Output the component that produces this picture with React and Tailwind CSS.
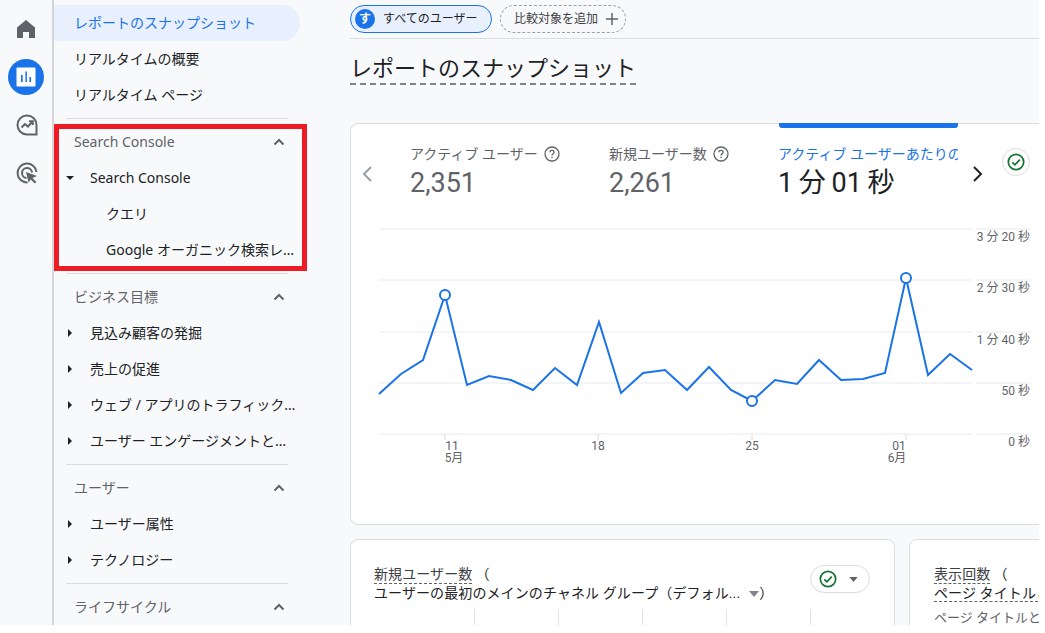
import React from 'react';

const points = [
  [379, 394], [401, 374], [423, 360], [445, 295], [467, 385], [489, 376], [511, 380], [533, 390],
  [555, 368], [577, 385], [599, 322], [621, 393], [643, 373], [665, 370], [687, 390], [709, 367],
  [731, 390], [752, 401], [775, 380], [797, 384], [819, 360], [841, 380], [863, 379], [885, 373],
  [906, 278], [928, 375], [950, 354], [972, 370],
];
const gridLines = [229, 280, 332, 383, 434];
const yLabels = [
  [241, '3 分 20 秒'],
  [292, '2 分 30 秒'],
  [344, '1 分 40 秒'],
  [395, '50 秒'],
  [446, '0 秒'],
];
// tick position, then where the day and month labels sit
const xLabels = [
  [445, 452, '11', 454, '5月'],
  [598, 598, '18', 0, null],
  [752, 752, '25', 0, null],
  [906, 899, '01', 897, '6月'],
];
const markers = [[445, 295], [752, 401], [906, 278]];

function Caret({ open }) {
  return (
    <svg width="8" height="8" viewBox="0 0 8 8" className="shrink-0 fill-[#202124]">
      {open ? <path d="M0 2h8L4 6z" /> : <path d="M2 0v8l4-4z" />}
    </svg>
  );
}

function ChevronUp() {
  return (
    <svg width="14" height="14" viewBox="0 0 14 14" className="fill-none stroke-[#5f6368] stroke-2">
      <path d="M2.500 9.500L7 5l4.500 4.500" />
    </svg>
  );
}

function CheckCircle({ size = 18 }) {
  return (
    <svg width={size} height={size} viewBox="0 0 18 18" className="fill-none stroke-[#137333]">
      <circle cx="9" cy="9" r="7.700" strokeWidth="1.700" />
      <path d="M5.300 9.300l2.600 2.600 4.900-5.200" strokeWidth="1.700" />
    </svg>
  );
}

function Help() {
  return (
    <svg width="16" height="16" viewBox="0 0 16 16" className="fill-none stroke-[#5f6368]">
      <circle cx="8" cy="8" r="7" strokeWidth="1.300" />
      <path d="M5.900 6.300c0-1.200 1-2 2.100-2s2.100.8 2.100 1.900c0 1.500-2.100 1.500-2.100 3.300" strokeWidth="1.300" />
      <path d="M8 10.800v1.300" strokeWidth="1.400" />
    </svg>
  );
}

function SectionHeader({ title }) {
  return (
    <div className="h-9 flex items-center justify-between pl-[20px] pr-[14px] text-[14px] text-[#5f6368] w-[246px]">
      <span className="mb-[2px]">{title}</span>
      <ChevronUp />
    </div>
  );
}

function Divider() {
  return <div className="h-px bg-[#dadce0] ml-[12px] w-[222px] my-[5px]" />;
}

function TreeRow({ label, open }) {
  return (
    <div className="h-9 flex items-center pl-[12px] text-[14px] text-[#202124] w-[246px]">
      <span className="w-[24px] flex">
        <Caret open={open} />
      </span>
      <span className="truncate w-[207px] mb-[2px]">{label}</span>
    </div>
  );
}

function Metric({ label, value, width }) {
  return (
    <div className={width}>
      <div className="flex items-center gap-[6px] h-[20px] text-[14px] text-[#5f6368] whitespace-nowrap">
        <span>{label}</span>
        <Help />
      </div>
      <div className="mt-[2px] text-[27px] leading-[34px] text-[#5f6368]">{value}</div>
    </div>
  );
}

function Rail() {
  return (
    <div className="w-[54px] shrink-0 border-r-2 border-[#d3d5d9] flex flex-col items-center pr-[1px]">
      <svg width="24" height="24" viewBox="0 0 24 24" className="mt-[17px] fill-[#5f6368]">
        <path d="M3 21V10.500L12 3l9 7.500V21h-6v-6h-6v6z" />
      </svg>
      <div className="mt-[18px] w-[36px] h-[36px] rounded-full bg-[#1a73e8] flex items-center justify-center">
        <svg width="20" height="20" viewBox="0 0 20 20">
          <rect width="19" height="19" x="0.500" y="0.500" rx="1" className="fill-white" />
          <path d="M5 8h1.700v7H5zM9.400 4.500h1.500V15H9.400zM13.400 10h1.700v5h-1.700z" className="fill-[#1a73e8]" />
        </svg>
      </div>
      <svg width="24" height="24" viewBox="0 0 24 24" className="mt-[18px] ml-[2px] fill-none stroke-[#5f6368] stroke-2">
        <path d="M21.500 12a9.500 9.500 0 1 0-9.500 9.500h9.500z" />
        <path d="M6.500 14.500l3.500-3.500 3 2.500 4.500-5" />
        <path d="M14 8.200h3.800V12" />
      </svg>
      <svg width="24" height="24" viewBox="0 0 24 24" className="mt-[24px] ml-[2px] fill-none stroke-[#5f6368] stroke-2">
        <path d="M12.500 21.500A9.500 9.500 0 1 1 21.500 11" />
        <path d="M11.500 17A5 5 0 1 1 17 11.500" />
        <path d="M11 11l11 4-4.500 2 3.800 4-1.500 1.500-4-4L13.500 21.500z" className="fill-[#5f6368] stroke-none" />
      </svg>
    </div>
  );
}

function Nav() {
  return (
    <div className="relative w-[296px] shrink-0 pt-[5px] font-['Noto_Sans','Noto_Sans_CJK_JP',sans-serif]">
      <div className="h-9 w-[246px] flex items-center pl-[20px] pb-[2px] rounded-r-full bg-[#e8f0fe] text-[14px] text-[#1a73e8]">
        レポートのスナップショット
      </div>
      <div className="h-9 flex items-center pl-[20px] pb-[2px] text-[14px] text-[#202124]">リアルタイムの概要</div>
      <div className="h-9 flex items-center pl-[20px] pb-[2px] text-[14px] text-[#202124]">リアルタイム ページ</div>
      <Divider />
      <SectionHeader title="Search Console" />
      <TreeRow label="Search Console" open />
      <div className="h-9 flex items-center pl-[52px] pb-[2px] text-[14px] text-[#202124]">クエリ</div>
      <div className="h-9 flex items-center pl-[52px] pb-[2px] text-[14px] text-[#202124] w-[246px]">
        <span className="truncate">Google オーガニック検索レポート</span>
      </div>
      <Divider />
      <SectionHeader title="ビジネス目標" />
      <TreeRow label="見込み顧客の発掘" />
      <TreeRow label="売上の促進" />
      <TreeRow label="ウェブ / アプリのトラフィック獲得" />
      <TreeRow label="ユーザー エンゲージメントと維持率" />
      <Divider />
      <SectionHeader title="ユーザー" />
      <TreeRow label="ユーザー属性" />
      <TreeRow label="テクノロジー" />
      <Divider />
      <SectionHeader title="ライフサイクル" />
      {/* red highlight drawn over the sidebar */}
      <div className="absolute left-0 top-[124px] w-[253px] h-[147px] border-[5px] border-[#ed1c24]" />
    </div>
  );
}

function Chart() {
  return (
    <svg width="690" height="250" viewBox="351 220 690 250" className="block">
      {gridLines.map((y) => (
        <g key={y} className="stroke-[#e8eaed]">
          <line x1="379" x2="972" y1={y} y2={y} />
          <line x1="976" x2="1031" y1={y} y2={y} />
        </g>
      ))}
      {xLabels.map(([tick, dayX, day, monthX, month]) => (
        <g key={day}>
          <line x1={tick} x2={tick} y1="434" y2="440" className="stroke-[#dadce0]" />
          <text x={dayX} y="450" textAnchor="middle" className="fill-[#5f6368] text-[12px]">{day}</text>
          {month && <text x={monthX} y="462" textAnchor="middle" className="fill-[#5f6368] text-[12px]">{month}</text>}
        </g>
      ))}
      {yLabels.map(([y, label]) => (
        <text key={label} x="1030" y={y} textAnchor="end" className="fill-[#5f6368] text-[12px]">{label}</text>
      ))}
      <polyline
        points={points.map((p) => p.join(',')).join(' ')}
        className="fill-none stroke-[#1a73e8] stroke-2"
      />
      {markers.map(([x, y]) => (
        <circle key={x} cx={x} cy={y} r="5" className="fill-white stroke-[#1a73e8] stroke-2" />
      ))}
    </svg>
  );
}

function MainCard() {
  return (
    <div className="relative mt-[38px] w-[700px] h-[402px] shrink-0 bg-white border border-[#dadce0] rounded-lg">
      <div className="absolute left-[428px] top-[-1px] w-[179px] h-[5px] bg-[#1a73e8] rounded-b-[3px]" />
      <div className="flex items-start h-[96px] pt-[20px]">
        <div className="w-[59px] h-[60px] flex items-center pl-[10px]">
          <svg width="14" height="18" viewBox="0 0 14 18" className="fill-none stroke-[#9aa0a6] stroke-2">
            <path d="M10 2L3 9l7 7" />
          </svg>
        </div>
        <Metric label="アクティブ ユーザー" value="2,351" width="w-[199px]" />
        <Metric label="新規ユーザー数" value="2,261" width="w-[169px]" />
        <div className="w-[180px] overflow-hidden">
          <div className="h-[20px] text-[14px] text-[#1a73e8] whitespace-nowrap">アクティブ ユーザーあたりの平均エンゲージメント時間</div>
          <div className="mt-[2px] text-[27px] leading-[34px] text-[#202124] [word-spacing:-1px]">1 分 01 秒</div>
        </div>
        <div className="w-[44px] h-[60px] flex items-center pl-[12px]">
          <svg width="14" height="18" viewBox="0 0 14 18" className="fill-none stroke-[#202124] stroke-2">
            <path d="M4 2l7 7-7 7" />
          </svg>
        </div>
        <div className="w-[28px] h-[28px] mt-[4px] rounded-full border border-[#dadce0] flex items-center justify-center">
          <CheckCircle />
        </div>
      </div>
      <Chart />
    </div>
  );
}

function BottomCards() {
  return (
    <div className="mt-[14px] flex gap-[14px] shrink-0">
      <div className="w-[545px] h-[120px] shrink-0 bg-white border border-[#dadce0] rounded-lg relative pl-[23px] pt-[25px]">
        <div className="text-[14px] leading-[19px] text-[#202124] tracking-[0.1px]">
          <div className="h-[19px] flex">
            <span className="border-b border-dashed border-[#5f6368] h-[19px] text-[#3c4043]">新規ユーザー数</span>
            <span className="ml-[3px]">（</span>
          </div>
          <div className="h-[19px] flex items-center whitespace-nowrap">
            <span>ユーザーの最初のメインのチャネル グループ（デフォル...</span>
            <svg width="10" height="6" viewBox="0 0 10 6" className="ml-[9px] fill-[#80868b]"><path d="M0 0h10L5 6z" /></svg>
            <span>）</span>
          </div>
        </div>
        <div className="absolute left-[459px] top-[25px] w-[60px] h-[28px] rounded-full border border-[#dadce0] flex items-center pl-[8px] gap-[12px]">
          <CheckCircle />
          <svg width="9" height="5" viewBox="0 0 10 6" className="fill-[#5f6368]"><path d="M0 0h10L5 6z" /></svg>
        </div>
        <div className="mt-[6px] ml-[100px] flex">
          {[0, 1, 2, 3, 4].map((i) => (
            <div key={i} className="w-[95.500px] h-[40px] border-l border-[#e0e2e5]" />
          ))}
        </div>
      </div>
      <div className="w-[300px] h-[120px] shrink-0 bg-white border border-[#dadce0] rounded-lg pl-[24px] pt-[25px]">
        <div className="text-[14px] leading-[19px] text-[#202124] tracking-[0.1px]">
          <div className="h-[19px] flex">
            <span className="border-b border-dashed border-[#5f6368] h-[19px] text-[#3c4043]">表示回数</span>
            <span className="ml-[3px]">（</span>
          </div>
          <div className="h-[19px] whitespace-nowrap">
            <span className="border-b border-dashed border-[#5f6368]">ページ タイトルとスクリーン名</span>
          </div>
        </div>
        <div className="mt-[7px] text-[13px] leading-[16px] text-[#5f6368] whitespace-nowrap">ページ タイトルとスクリーン クラス</div>
      </div>
    </div>
  );
}

export default function App() {
  return (
    <div className="w-[1045px] h-[633px] bg-white overflow-hidden font-['Roboto','Noto_Sans_CJK_JP',sans-serif]">
      <div className="w-[1039px] h-[625px] bg-[#f8f9fb] flex overflow-hidden">
        <Rail />
        <Nav />
        <div className="w-[689px] shrink-0 flex flex-col overflow-hidden">
          <div className="h-[39px] shrink-0 border-b border-[#dadce0] flex items-start pt-[5px] gap-[8px]">
            <div className="h-[28px] w-[142px] rounded-full border border-[#1a73e8] bg-[#e8f0fe] flex items-center pl-[4px] text-[12px] text-[#202124]">
              <span className="w-[20px] h-[20px] rounded-full bg-[#1a73e8] text-white text-[12px] font-bold flex items-center justify-center">す</span>
              <span className="ml-[8px]">すべてのユーザー</span>
            </div>
            <div className="h-[28px] w-[126px] rounded-full border border-dashed border-[#9aa0a6] flex items-center pl-[13px] text-[12px] text-[#3c4043]">
              <span>比較対象を追加</span>
              <svg width="12" height="12" viewBox="0 0 12 12" className="ml-[8px] stroke-[#5f6368] stroke-[1.500]"><path d="M6 0v12M0 6h12" /></svg>
            </div>
          </div>
          <div className="mt-[13px] h-[33px] w-fit border-b-2 border-dashed border-[#80868b] pt-[3px] text-[22px] leading-[28px] text-[#202124] whitespace-nowrap shrink-0">
            レポートのスナップショット
          </div>
          <MainCard />
          <BottomCards />
        </div>
      </div>
    </div>
  );
}
